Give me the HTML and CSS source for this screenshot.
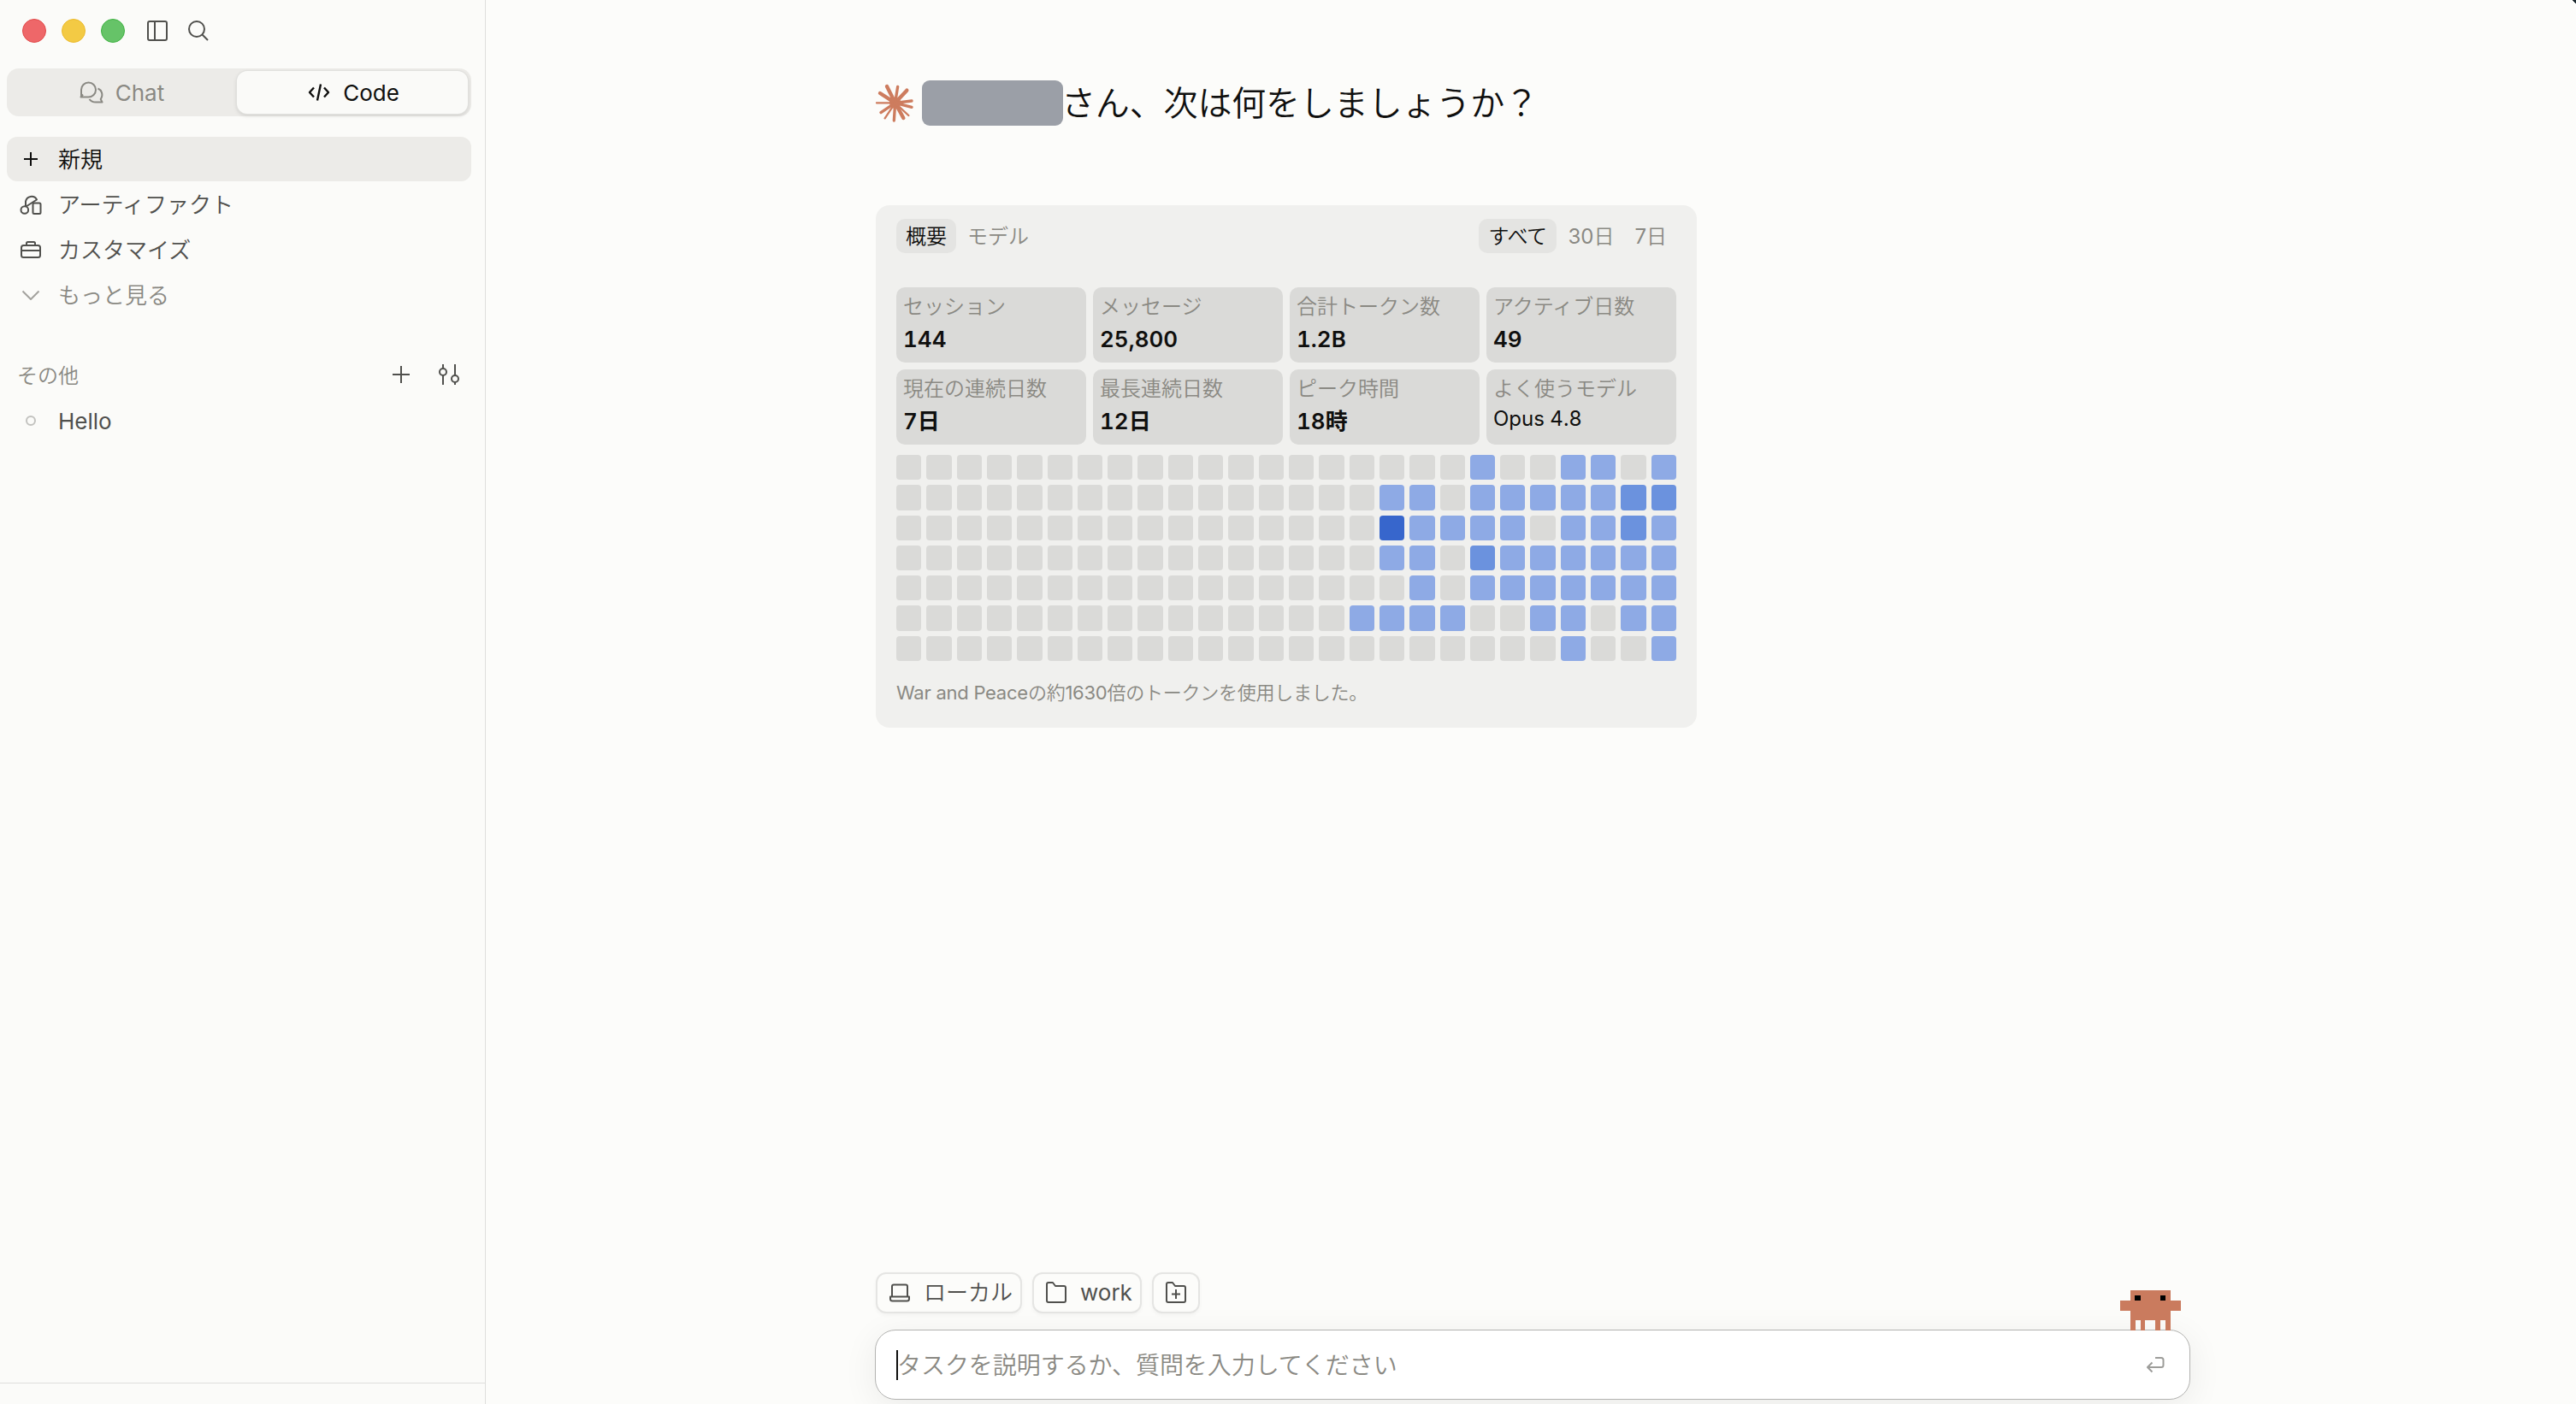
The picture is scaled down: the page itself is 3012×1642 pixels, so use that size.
FILE: index.html
```html
<!DOCTYPE html>
<html lang="ja">
<head>
  <meta charset="UTF-8">
  <meta name="viewport" content="width=device-width, initial-scale=1.0">
  <title>Code</title>
  <link rel="stylesheet" href="styles.css">
</head>
<body>
  <aside class="sidebar">
    <div class="titlebar">
      <span class="light red"></span>
      <span class="light yellow"></span>
      <span class="light green"></span>
      <svg class="icon panel" viewBox="0 0 24 24"><rect x="1" y="1" width="22" height="22" rx="2"/><path d="M9 1v22"/></svg>
      <svg class="icon search" viewBox="0 0 24 24"><circle cx="10" cy="10" r="9"/><path d="M16.5 16.5l6.5 6.5"/></svg>
    </div>
    <div class="switch">
      <div class="switch-item">
        <svg class="icon" width="28" height="26" viewBox="0 0 28 26"><path d="M2 18.500V10a8.500 8.500 0 1 1 8.500 8.500H1.500L4 15.500"/><path d="M21.500 8.500a8 8 0 0 1 4 11l-.8 1.500 1.800 3.500h-7.500q-5 0-7.500-3.500"/></svg>
        <span class="en">Chat</span>
      </div>
      <div class="switch-item active">
        <svg class="icon code" width="26" height="22" viewBox="0 0 26 22"><path d="M7 5.500L2 11l5 5.500M19 5.500l5 5.500-5 5.500M15 1.500L11 20.500"/></svg>
        <span class="en">Code</span>
      </div>
    </div>
    <ul class="nav">
      <li class="current">
        <svg class="icon" viewBox="0 0 26 26"><path d="M13 5v16M5 13h16"/></svg>
        <span>新規</span>
      </li>
      <li>
        <svg class="icon" viewBox="0 0 26 26"><circle cx="5.800" cy="19.500" r="4.300"/><rect x="15.500" y="11.500" width="9" height="12.500" rx="1.500"/><path d="M7 15.500V9.500a7 7 0 0 1 13-2L7.500 15.500"/></svg>
        <span>アーティファクト</span>
      </li>
      <li>
        <svg class="icon" viewBox="0 0 26 26"><rect x="2" y="8" width="22" height="14" rx="2.500"/><path d="M2 14h22M8 8V5.500q0-1.500 1.500-1.500h7q1.500 0 1.500 1.500V8"/></svg>
        <span>カスタマイズ</span>
      </li>
      <li class="more">
        <svg class="icon" viewBox="0 0 26 26"><path d="M3.500 8.500L13 18l9.500-9.500"/></svg>
        <span>もっと見る</span>
      </li>
    </ul>
    <div class="group-head">
      <span>その他</span>
      <svg class="icon" width="20" height="20" viewBox="0 0 20 20"><path d="M10 0v20M0 10h20"/></svg>
      <svg class="icon" width="24" height="24" viewBox="0 0 24 24"><circle cx="5" cy="9" r="4"/><circle cx="19" cy="17" r="4"/><path d="M5 0v5M5 13v11M19 0v13M19 21v3"/></svg>
    </div>
    <ul class="nav sessions">
      <li>
        <svg class="icon dot" viewBox="0 0 26 26"><circle cx="13" cy="12" r="5"/></svg>
        <span class="en">Hello</span>
      </li>
    </ul>
    <div class="sidebar-foot"></div>
  </aside>

  <main class="main">
    <h1 class="greeting">
      <svg class="burst" viewBox="42 42 132 135">
        <circle cx="110" cy="109" r="15"/>
        <path class="thick" d="M110 109L81 51M110 109L151 65M110 109L57 75M110 109L139 162"/>
        <path d="M110 109L119 52M110 109L168 102M110 109L168 124M110 109L106 171M110 109L60 143"/>
        <path class="thin" d="M110 109L157 153M110 109L74 163M110 109L45 109"/>
      </svg>
      <span class="name"></span>
      <span class="ask">さん、次は何をしましょうか？</span>
    </h1>

    <section class="card">
      <div class="card-head">
        <div class="tabs">
          <span class="tab active">概要</span>
          <span class="tab">モデル</span>
        </div>
        <div class="tabs">
          <span class="tab active kana">すべて</span>
          <span class="tab"><span class="en">30</span>日</span>
          <span class="tab"><span class="en">7</span>日</span>
        </div>
      </div>
      <div class="stats">
        <div class="stat"><p>セッション</p><b>144</b></div>
        <div class="stat"><p>メッセージ</p><b>25,800</b></div>
        <div class="stat"><p>合計トークン数</p><b>1.2B</b></div>
        <div class="stat"><p>アクティブ日数</p><b>49</b></div>
        <div class="stat"><p>現在の連続日数</p><b>7日</b></div>
        <div class="stat"><p>最長連続日数</p><b>12日</b></div>
        <div class="stat"><p>ピーク時間</p><b>18時</b></div>
        <div class="stat"><p>よく使うモデル</p><b class="model">Opus 4.8</b></div>
      </div>
      <div class="heatmap"></div>
      <p class="note"><span class="en">War and Peace</span>の約<span class="en">1630</span>倍のトークンを使用しました。</p>
    </section>

    <footer class="composer">
      <div class="chips">
        <div class="chip">
          <svg class="icon" width="24" height="26" viewBox="0 0 24 26"><path d="M3 17.500V5.500q0-2 2-2h14q2 0 2 2v12M1 17.500h22v2.500q0 2.500-2.500 2.500h-17Q1 22.500 1 20z"/></svg>
          <span>ローカル</span>
        </div>
        <div class="chip">
          <svg class="icon" width="24" height="26" viewBox="0 0 24 26"><path d="M1 22V3q0-2 2-2h5l3 4h10q2 0 2 2v15q0 2-2 2H3q-2 0-2-2z"/></svg>
          <span class="en">work</span>
        </div>
        <div class="chip">
          <svg class="icon" width="24" height="26" viewBox="0 0 24 26"><path d="M1 22V3q0-2 2-2h5l3 4h10q2 0 2 2v15q0 2-2 2H3q-2 0-2-2zM12 9v11M7 14.500h10"/></svg>
        </div>
      </div>
      <div class="input">
        <span class="caret"></span>
        <span class="placeholder">タスクを説明するか、質問を入力してください</span>
        <svg class="icon enter" width="22" height="20" viewBox="0 0 22 20"><path d="M11 2h7q2.500 0 2.500 2.500v6q0 2.500-2.500 2.500H2M7.500 7.500L2 13l5.500 5.500"/></svg>
        <svg class="crab" viewBox="0 0 71 47">
          <path d="M12 0h47v12h12v12H59v23h-6V35h-6v12h-6V35H29v12h-5V35h-6v12h-6V24H0V12h12z"/>
          <path class="eye" d="M17 6h7v6h-7zM47 6h6v6h-6z"/>
        </svg>
      </div>
    </footer>
    <i class="corner"></i>
  </main>

  <script>
    // 7 days x 26 weeks, 0 = no activity
    var days = [
      '00000000000000000001001101',
      '00000000000000001101111122',
      '00000000000000003111101121',
      '00000000000000001102111111',
      '00000000000000000101111111',
      '00000000000000011110011011',
      '00000000000000000000001001'
    ]
    var heatmapEl = document.getElementsByClassName('heatmap')[0]
    days.join('').split('').forEach(function (level) {
      var cell = document.createElement('i')
      cell.className = 'l' + level
      heatmapEl.appendChild(cell)
    })
  </script>
</body>
</html>
```
FILE: styles.css
```css
* {
  box-sizing: border-box;
}
body {
  margin: 0;
  display: flex;
  height: 1642px;
  overflow: hidden;
  background: #fcfcfa;
  color: #0f0f0e;
  font-family: Inter, "Noto Sans CJK JP", sans-serif;
  font-size: 26px;
  font-weight: 350;
}
p, ul, h1 {
  margin: 0;
  padding: 0;
  list-style: none;
}
.en {
  font-weight: 430;
}
.icon {
  flex: none;
  fill: none;
  stroke: currentColor;
  stroke-width: 2;
  stroke-linejoin: round;
}

.sidebar {
  flex: none;
  display: flex;
  flex-direction: column;
  width: 568px;
  border-right: 1px solid #dededc;
  background: #fbfbf9;
  color: #50504d;
}
.titlebar {
  display: flex;
  align-items: center;
  height: 72px;
  padding-left: 26px;
  gap: 18px;
}
.light {
  width: 28px;
  height: 28px;
  border-radius: 50%;
}
.red {
  background: #ee6769;
  border: 1px solid #e24b4b;
}
.yellow {
  background: #f3ca44;
  border: 1px solid #ecba2c;
}
.green {
  background: #66c368;
  border: 1px solid #40b343;
}
.titlebar .icon {
  width: 24px;
  height: 24px;
}
.panel {
  margin-left: 8px;
}
.search {
  margin-left: 6px;
}
.switch {
  display: flex;
  height: 56px;
  margin: 8px 16px 24px 8px;
  padding: 3px 4px 3px 0;
  border-radius: 14px;
  background: #ecebe8;
}
.switch-item {
  display: flex;
  width: 269px;
  align-items: center;
  justify-content: center;
  gap: 14px;
  border-radius: 12px;
  color: #8a8983;
}
.switch-item.active {
  width: 270px;
  padding-left: 3px;
  gap: 15px;
  background: #fafaf8;
  color: #0f0f0e;
  box-shadow: 0 0 0 1px #e0e0dd, 0 2px 5px rgba(0, 0, 0, .14);
}
.code {
  stroke-width: 2.4;
}
.nav {
  display: flex;
  flex-direction: column;
  gap: 1px;
  margin: 0 16px 0 8px;
}
.nav li {
  display: flex;
  align-items: center;
  height: 52px;
  padding-left: 15px;
  gap: 19px;
  border-radius: 12px;
}
.nav span {
  padding-bottom: 3px;
}
.nav .icon {
  width: 26px;
  height: 26px;
}
.nav .current {
  background: #ecebe8;
  color: #0f0f0e;
}
.nav .more {
  color: #8a8983;
}
.nav .more .icon {
  stroke: #a3a29e;
}
.nav .dot {
  stroke: #c2c2bf;
}
.group-head {
  display: flex;
  align-items: center;
  height: 40px;
  margin-top: 47px;
  padding: 0 30px 0 20px;
  font-size: 24px;
}
.group-head span {
  flex: 1;
  padding-bottom: 2px;
  color: #8a8983;
}
.group-head .icon + .icon {
  margin-left: 34px;
}
.sessions {
  margin-top: 9px;
}
.sessions span {
  padding-bottom: 2px;
}
.sidebar-foot {
  height: 25px;
  margin-top: auto;
  border-top: 1px solid #dededc;
}

.main {
  position: relative;
  display: flex;
  flex: 1;
  flex-direction: column;
  padding: 94px 451px 5px 455px;
}
.greeting {
  display: flex;
  align-items: center;
  height: 53px;
  margin: 0 0 93px 1px;
  font-size: 40px;
  font-weight: 350;
  white-space: nowrap;
}
.burst {
  width: 44px;
  height: 45px;
  fill: #cd7c5e;
  stroke: #cd7c5e;
  stroke-width: 10;
  stroke-linecap: round;
}
.burst .thick {
  stroke-width: 13;
}
.burst .thin {
  stroke-width: 7;
}
.name {
  width: 165px;
  height: 53px;
  margin: 0 0 0 10px;
  border-radius: 9px;
  background: #9b9fa7;
}
.ask {
  margin-left: -2px;
  padding-bottom: 6px;
  letter-spacing: -.15px;
}

.card {
  width: 960px;
  height: 611px;
  margin-left: 1px;
  padding: 16px 24px;
  border-radius: 16px;
  background: #f0f0ee;
  font-size: 24px;
}
.card-head {
  display: flex;
  justify-content: space-between;
  margin-bottom: 40px;
}
.tabs {
  display: flex;
  gap: 2px;
}
.tab {
  height: 40px;
  padding: 0 11px;
  border-radius: 10px;
  color: #8a8983;
  line-height: 41px;
}
.tab.active {
  background: #e4e4e2;
  color: #0f0f0e;
}
.tab.kana {
  padding: 0 12px;
  letter-spacing: -.5px;
}
.stats {
  display: grid;
  grid-template-columns: repeat(4, 1fr);
  gap: 8px;
}
.stat {
  height: 88px;
  padding: 4px 8px;
  border-radius: 10px;
  background: #dadad8;
  white-space: nowrap;
}
.stat p {
  height: 38px;
  color: #8a8983;
  line-height: 38px;
}
.stat b {
  display: block;
  font-size: 26px;
  font-weight: 600;
  font-feature-settings: "tnum";
  line-height: 37px;
}
.stat .model {
  font-size: 24px;
  font-weight: 400;
  line-height: 32px;
}
.heatmap {
  display: grid;
  grid-template-columns: repeat(26, 1fr);
  grid-auto-rows: 29.3px;
  gap: 6px;
  margin-top: 12px;
}
.heatmap i {
  border-radius: 4px;
}
.l0 {
  background: #dadad8;
}
.l1 {
  background: #8eaae5;
}
.l2 {
  background: #6b92de;
}
.l3 {
  background: #3766cc;
}
.note {
  margin-top: 21px;
  color: #8a8983;
  font-size: 22px;
  letter-spacing: -.25px;
  line-height: 32px;
}

.composer {
  margin-top: auto;
}
.chips {
  display: flex;
  gap: 12px;
  margin: 0 0 19px 1px;
  color: #50504d;
}
.chip {
  display: flex;
  align-items: center;
  height: 48px;
  padding: 0 14px;
  gap: 16px;
  border: 2px solid #e5e5e3;
  border-radius: 12px;
  background: #fcfcfa;
  box-shadow: 0 2px 4px rgba(0, 0, 0, .04);
  line-height: 40px;
}
.chip span {
  margin-right: -5px;
}
.input {
  position: relative;
  display: flex;
  align-items: center;
  width: 1538px;
  height: 82px;
  padding: 0 29px 0 24px;
  border: 1px solid #b3b3b1;
  border-radius: 24px;
  background: #fff;
  box-shadow: 0 8px 40px rgba(0, 0, 0, .07);
  font-size: 28px;
}
.caret {
  width: 2px;
  height: 35px;
  background: #0f0f0e;
}
.placeholder {
  flex: 1;
  margin-left: -1px;
  padding-bottom: 3px;
  color: #8a8983;
  letter-spacing: -.05px;
}
.enter {
  color: #9d9d9a;
}
/* sits on the top edge of the input */
.crab {
  position: absolute;
  right: 10px;
  bottom: 80px;
  width: 71px;
  height: 47px;
  fill: #ca7b5e;
}
.crab .eye {
  fill: #000;
}
/* dark desktop behind the rounded window corner */
.corner {
  position: absolute;
  top: 0;
  right: 0;
  width: 4px;
  height: 4px;
  background: linear-gradient(45deg, transparent 50%, #1d2a30 50%);
}
```
